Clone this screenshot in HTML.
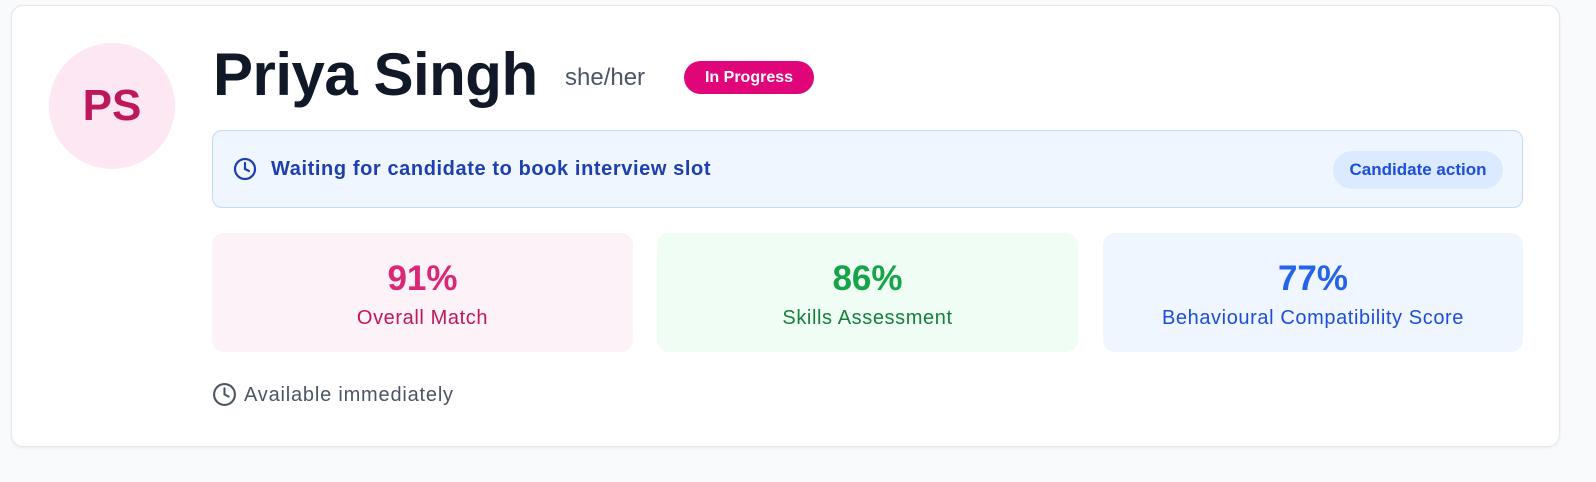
<!DOCTYPE html>
<html><head><style>
*{box-sizing:border-box;margin:0;padding:0}
body{width:1596px;height:482px;background:#f8fafc;font-family:"Liberation Sans",sans-serif;position:relative;overflow:hidden}
.card{position:absolute;left:11px;top:5px;width:1549px;height:442px;background:#fff;border:1px solid #e5e7eb;border-radius:12px;box-shadow:0 1px 3px rgba(0,0,0,.06)}
.av{position:absolute;left:49px;top:43px;width:126px;height:126px;border-radius:50%;background:#fce7f3;color:#be185d;font-weight:bold;font-size:44px;display:flex;align-items:center;justify-content:center}
.name{position:absolute;left:213px;top:40px;font-size:60px;font-weight:bold;color:#111827;letter-spacing:-0.5px;line-height:70px}
.pr{position:absolute;left:565px;top:64px;font-size:24px;color:#4b5563}
.badge{position:absolute;left:684px;top:61px;width:130px;height:33px;border-radius:17px;background:#e0067a;color:#fff;font-weight:bold;font-size:16px;display:flex;align-items:center;justify-content:center}
.ban{position:absolute;left:212px;top:130px;width:1311px;height:78px;background:#eff6ff;border:1px solid #bfdbfe;border-radius:10px}
.bt{position:absolute;left:271px;top:158px;font-size:20px;font-weight:bold;color:#1e40af;letter-spacing:0.6px}
.pill{position:absolute;left:1333px;top:151px;width:170px;height:38px;border-radius:19px;background:#dbeafe;color:#1d4ed8;font-weight:bold;font-size:17px;display:flex;align-items:center;justify-content:center}
.st{position:absolute;top:233px;width:421px;height:119px;border-radius:12px;text-align:center}
.st b{display:block;font-size:35px;margin-top:25px;line-height:42px}
.st span{display:block;font-size:20px;margin-top:7px;letter-spacing:0.6px}
.av2{position:absolute;left:244px;top:384px;font-size:20px;color:#4b5563;letter-spacing:0.8px}
</style></head><body>
<div class="card"></div>
<div class="av">PS</div>
<div class="name">Priya Singh</div>
<div class="pr">she/her</div>
<div class="badge">In Progress</div>
<div class="ban"></div>
<svg style="position:absolute;left:233px;top:157px" width="24" height="24" viewBox="0 0 24 24" fill="none" stroke="#1e40af" stroke-width="2.2" stroke-linecap="round"><circle cx="12" cy="12" r="10"/><path d="M12 6v6l4 2"/></svg>
<div class="bt">Waiting for candidate to book interview slot</div>
<div class="pill">Candidate action</div>
<div class="st" style="left:212px;background:#fdf2f8"><b style="color:#db2777">91%</b><span style="color:#be185d">Overall Match</span></div>
<div class="st" style="left:657px;background:#f0fdf4"><b style="color:#16a34a">86%</b><span style="color:#15803d">Skills Assessment</span></div>
<div class="st" style="left:1103px;width:420px;background:#eff6ff"><b style="color:#2563eb">77%</b><span style="color:#1d4ed8">Behavioural Compatibility Score</span></div>
<svg style="position:absolute;left:212px;top:382px" width="25" height="25" viewBox="0 0 24 24" fill="none" stroke="#4b5563" stroke-width="2" stroke-linecap="round"><circle cx="12" cy="12" r="10"/><path d="M12 6v6l4 2"/></svg>
<div class="av2">Available immediately</div>
</body></html>
